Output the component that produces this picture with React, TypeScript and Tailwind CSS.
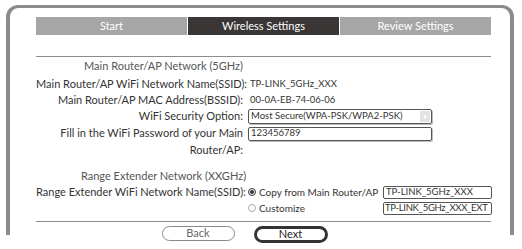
import React from 'react';

const font = { fontFamily: 'Lato, "Noto Sans", sans-serif' };

function Radio({ checked }: { checked?: boolean }) {
  return (
    <span
      className={`flex h-[8px] w-[8px] items-center justify-center rounded-full border ${
        checked ? 'border-[#333]' : 'border-[#aaa]'
      }`}
    >
      {checked && <span className="h-[4px] w-[4px] rounded-full bg-[#333]" />}
    </span>
  );
}

function Row({ label, children, h = 'h-[17px]' }: { label: string; children?: React.ReactNode; h?: string }) {
  return (
    <div className={`flex items-center whitespace-nowrap ${h}`}>
      <div className="w-[207px] shrink-0 text-right">{label}</div>
      <div className="ml-[5px] flex flex-1 items-center">{children}</div>
    </div>
  );
}

export default function App() {
  return (
    <div className="h-[249px] w-[522px] bg-white pl-[6px] pt-[5px] text-[11px] text-[#333]" style={font}>
      <div className="h-[230px] w-[508px] rounded-t-[12px] border-x-4 border-t-[3px] border-[#8c8c8c]">
        <div className="w-[481px] pl-[26px] pt-[9px]">
          {/* step tabs */}
          <div className="flex h-[18px] w-[455px] text-[11px] text-white">
            <div className="flex flex-1 items-center justify-center bg-[#a6a6a6]">Start</div>
            <div className="flex flex-1 items-center justify-center border-x border-white bg-[#3b3636]">
              Wireless Settings
            </div>
            <div className="flex flex-1 items-center justify-center bg-[#a6a6a6]">Review Settings</div>
          </div>

          <div className="mt-[21px] h-px w-[455px] bg-[#8c8c8c]" />

          <div className="mt-[1px] flex h-[16px] w-[255px] items-center justify-center whitespace-nowrap text-[#555]">
            Main Router/AP Network (5GHz)
          </div>

          <div className="mt-[2px] w-[455px]">
            <Row label="Main Router/AP WiFi Network Name(SSID):" h="h-[16px]">
              <span className="ml-[2px] text-[9.5px]">TP-LINK_5GHz_XXX</span>
            </Row>
            <Row label="Main Router/AP MAC Address(BSSID):" h="h-[16px]">
              <span className="ml-[2px] text-[9.5px]">00-0A-EB-74-06-06</span>
            </Row>
            <Row label="WiFi Security Option:">
              <div className="flex h-[15px] w-[184px] items-center justify-between rounded-[2px] border border-[#555] pl-[2px] pr-[1px] text-[9.5px] shadow-[1px_1px_0_#bbb]">
                <span>Most Secure(WPA-PSK/WPA2-PSK)</span>
                <span className="flex h-[11px] w-[10px] items-center justify-center bg-[#e3e3e3] text-[6px] text-white">▼</span>
              </div>
            </Row>
            <Row label="Fill in the WiFi Password of your Main">
              <div className="flex h-[14px] w-[184px] items-center rounded-[2px] border border-[#555] pl-[2px] text-[9.5px] shadow-[1px_1px_0_#bbb]">
                123456789
              </div>
            </Row>
            <Row label="Router/AP:" />
          </div>

          <div className="mt-[9px] flex h-[16px] w-[255px] items-center justify-center whitespace-nowrap text-[#555]">
            Range Extender Network (XXGHz)
          </div>

          <div className="w-[455px]">
            <Row label="Range Extender WiFi Network Name(SSID):" h="h-[16px]">
              <Radio checked />
              <span className="ml-[3px] w-[124px] text-[10px]">Copy from Main Router/AP</span>
              <div className="flex h-[13px] w-[109px] items-center rounded-[2px] border border-[#555] pl-[2px] text-[9.5px] leading-none">
                TP-LINK_5GHz_XXX
              </div>
            </Row>
            <Row label="" h="h-[16px]">
              <Radio />
              <span className="ml-[3px] w-[124px] text-[10px]">Customize</span>
              <div className="flex h-[13px] w-[109px] items-center overflow-hidden rounded-[2px] border border-[#555] pl-[1px] text-[9.5px] leading-none tracking-[-0.3px]">
                TP-LINK_5GHz_XXX_EXT
              </div>
            </Row>
          </div>

          <div className="mt-[5px] h-px w-[455px] bg-[#8c8c8c]" />

          {/* buttons */}
          <div className="mt-[4px] flex w-[455px] justify-center gap-[19px] pr-[38px]">
            <button className="flex h-[15px] w-[73px] items-center justify-center rounded-full border border-[#888] text-[11px] text-[#666]">
              Back
            </button>
            <button className="flex h-[17px] w-[74px] items-center justify-center rounded-full border-[3px] border-[#333] text-[11px] text-[#222]">
              Next
            </button>
          </div>
        </div>
      </div>
    </div>
  );
}
